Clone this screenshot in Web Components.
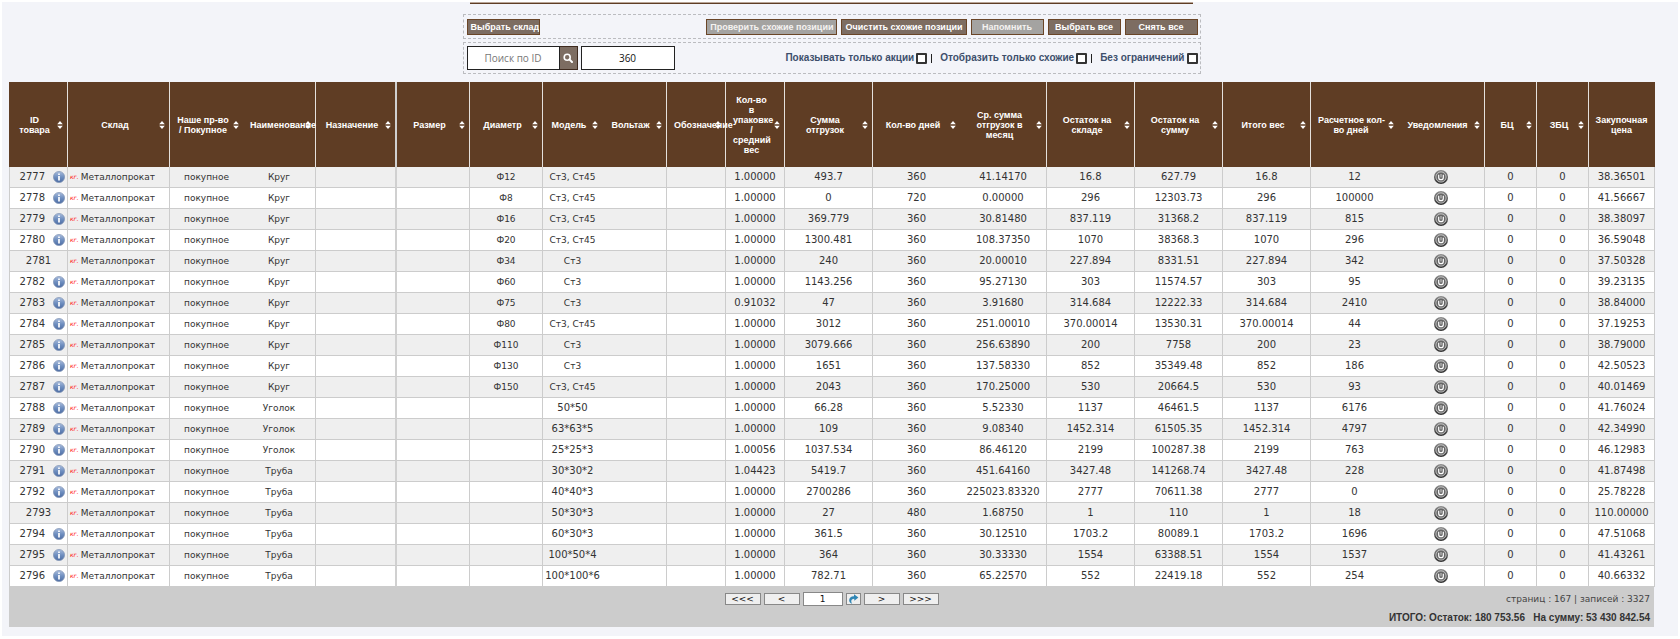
<!DOCTYPE html>
<html lang="ru">
<head>
<meta charset="utf-8">
<title>Складские остатки</title>
<style>
html{background:#fff}
body{margin:2px;background:#f3f4f9;font-family:"DejaVu Sans",Verdana,sans-serif;color:#333}
</style>
</head>
<body>
<stock-page></stock-page>
<script>
const define=(name,html,setup)=>customElements.define(name,class extends HTMLElement{
  constructor(){super();this.attachShadow({mode:'open'}).innerHTML=html;}
  connectedCallback(){if(setup&&!this.ready){this.ready=true;setup(this,this.shadowRoot);}}
});

define('tool-button',`<style>
:host{display:block;width:73px}
:host([wide]){width:auto}
button{box-sizing:border-box;display:block;width:100%;height:16px;padding:0 3px;overflow:hidden;white-space:nowrap;border:1px solid #6a4527;background:#7d6d62;color:#fff;font:bold 9px/14px "Liberation Sans",Arial,sans-serif}
button:disabled{background:#a4a3a1;color:#f4f2f0}
</style><button type="button"><slot></slot></button>`,(h,r)=>{r.querySelector('button').disabled=h.hasAttribute('disabled');});

define('check-option',`<style>
:host{display:block}
label{display:flex;align-items:center;gap:2px;font:bold 10px/12px "Liberation Sans",Arial,sans-serif;color:#3d4f6c}
input{appearance:none;box-sizing:border-box;width:11px;height:11px;margin:0;border:2px solid #333;border-radius:1px;background:#fff}
</style><label><slot></slot><input type="checkbox"></label>`);

define('search-box',`<style>
:host{display:flex;gap:3px;height:24px}
form{display:flex}
input{box-sizing:border-box;width:93px;height:24px;margin:0;padding:0;border:1px solid #222;background:#fff;text-align:center;font:10px/22px "Open Sans","Noto Sans",sans-serif;color:#111}
input::placeholder{color:#777;opacity:1}
.num{width:94px}
button{box-sizing:border-box;display:flex;align-items:center;justify-content:center;width:18px;height:24px;padding:0;border:1px solid #3e2a1e;border-left:0;background:#7d6d62}
svg{width:10px;height:10px}
</style><form><input type="text" placeholder="Поиск по ID" aria-label="Поиск по ID"><button type="button" aria-label="Найти"><svg viewBox="0 0 10 10" fill="none" stroke="#fff"><circle cx="4.2" cy="4.2" r="3" stroke-width="1.6"/><path d="M6.4 6.4 9 9" stroke-width="2" stroke-linecap="round"/></svg></button></form><input class="num" type="text" value="360" aria-label="Количество дней">`);

define('filter-panel',`<style>
:host{display:block;box-sizing:border-box;width:738px;max-width:100%;margin:0 auto}
.row{box-sizing:border-box;display:flex;align-items:center;justify-content:space-between;padding:0 2px 0 3px;border:1px dashed #bbbcc0}
.a{height:25px}
.b{height:32px;margin-top:3px}
.g{display:flex;align-items:center;gap:4px}
.c{display:flex;align-items:center}
i{width:1px;height:9px;background:#222;margin:0 8px 0 4px}
</style>
<div class="row a"><tool-button>Выбрать склад</tool-button><div class="g"><tool-button wide disabled>Проверить схожие позиции</tool-button><tool-button wide>Очистить схожие позиции</tool-button><tool-button disabled>Напомнить</tool-button><tool-button>Выбрать все</tool-button><tool-button>Снять все</tool-button></div></div>
<div class="row b"><search-box></search-box><div class="c"><check-option>Показывать только акции</check-option><i></i><check-option>Отобразить только схожие</check-option><i></i><check-option>Без ограничений</check-option></div></div>`);

define('info-icon',`<style>:host{display:block;width:12px;height:12px}svg{display:block}</style>
<svg width="12" height="12" viewBox="0 0 12 12"><defs><linearGradient id="g" x2="0" y2="1"><stop stop-color="#a9bcdc"/><stop offset=".5" stop-color="#6f8fc0"/><stop offset="1" stop-color="#4c6ca3"/></linearGradient></defs><circle cx="6" cy="6" r="5.6" fill="url(#g)" stroke="#8395b5" stroke-width=".7"/><path d="M6 2.4v1.5M6 5v4.4" stroke="#fff" stroke-width="1.7"/></svg>`);

define('power-icon',`<style>:host{display:block;width:14px;height:14px}svg{display:block}</style>
<svg width="14" height="14" viewBox="0 0 14 14" fill="none"><defs><linearGradient id="g" x2="0" y2="1"><stop stop-color="#8e8e8e"/><stop offset="1" stop-color="#2e2e2e"/></linearGradient></defs><circle cx="7" cy="7" r="7" fill="url(#g)"/><circle cx="7" cy="7" r="5.100" fill="#666" stroke="#d8d8d8" stroke-width=".8"/><path d="M4.700 4.800v2.600a2.300 2.300 0 0 0 4.600 0V4.800" stroke="#fff" stroke-width="1.200"/><path d="M7 4v3.400" stroke="#ddd" stroke-width=".9"/></svg>`);

const COLS=[['ID<br>товара',59],['Склад',102],['Наше пр-во<br>/ Покупное',73,'n'],['Наименование',73],['Назначение',81,'d'],['Размер',73],['Диаметр',73],['Модель',59,'n'],['Вольтаж',65],['Обозначение',59],['Кол-во<br>в<br>упаковке<br>/<br>средний<br>вес',59],['Сумма<br>отгрузок',88],['Кол-во дней',87,'n'],['Ср. сумма<br>отгрузок в<br>месяц',87],['Остаток на<br>складе',88],['Остаток на<br>сумму',88],['Итого вес',88],['Расчетное кол-<br>во дней',87,'n'],['Уведомления',87],['БЦ',52],['ЗБЦ',52],['Закупочная<br>цена',66,'last']];
const ROWS=`2777|Круг|Ф12|Ст3, Ст45|1.00000|493.7|360|41.14170|16.8|627.79|12|38.36501
2778|Круг|Ф8|Ст3, Ст45|1.00000|0|720|0.00000|296|12303.73|100000|41.56667
2779|Круг|Ф16|Ст3, Ст45|1.00000|369.779|360|30.81480|837.119|31368.2|815|38.38097
2780|Круг|Ф20|Ст3, Ст45|1.00000|1300.481|360|108.37350|1070|38368.3|296|36.59048
2781|Круг|Ф34|Ст3|1.00000|240|360|20.00010|227.894|8331.51|342|37.50328
2782|Круг|Ф60|Ст3|1.00000|1143.256|360|95.27130|303|11574.57|95|39.23135
2783|Круг|Ф75|Ст3|0.91032|47|360|3.91680|314.684|12222.33|2410|38.84000
2784|Круг|Ф80|Ст3, Ст45|1.00000|3012|360|251.00010|370.00014|13530.31|44|37.19253
2785|Круг|Ф110|Ст3|1.00000|3079.666|360|256.63890|200|7758|23|38.79000
2786|Круг|Ф130|Ст3|1.00000|1651|360|137.58330|852|35349.48|186|42.50523
2787|Круг|Ф150|Ст3, Ст45|1.00000|2043|360|170.25000|530|20664.5|93|40.01469
2788|Уголок||50*50|1.00000|66.28|360|5.52330|1137|46461.5|6176|41.76024
2789|Уголок||63*63*5|1.00000|109|360|9.08340|1452.314|61505.35|4797|42.34990
2790|Уголок||25*25*3|1.00056|1037.534|360|86.46120|2199|100287.38|763|46.12983
2791|Труба||30*30*2|1.04423|5419.7|360|451.64160|3427.48|141268.74|228|41.87498
2792|Труба||40*40*3|1.00000|2700286|360|225023.83320|2777|70611.38|0|25.78228
2793|Труба||50*30*3|1.00000|27|480|1.68750|1|110|18|110.00000
2794|Труба||60*30*3|1.00000|361.5|360|30.12510|1703.2|80089.1|1696|47.51068
2795|Труба||100*50*4|1.00000|364|360|30.33330|1554|63388.51|1537|41.43261
2796|Труба||100*100*6|1.00000|782.71|360|65.22570|552|22419.18|254|40.66332`.split('\n').map(l=>l.split('|'));

define('stock-table',`<style>
:host{display:block}
table{width:100%;table-layout:fixed;border-collapse:separate;border-spacing:0;color:#333}
th,td{box-sizing:border-box;padding:0;border-right:1px solid #ccc;text-align:center;white-space:nowrap}
th{height:85px;background:#5f3d24;border-right-color:#e4e0dc;font:bold 9px/10px "Liberation Sans",Arial,sans-serif;color:#fff}
th button{display:flex;align-items:center;gap:4px;width:100%;padding:0 4px 0 7px;border:0;background:none;font:inherit;color:inherit}
th span{flex:1;min-width:0}
th svg{flex:none;width:6px;height:8px}
th.last{border-right-color:#5f3d24}
th.last button{padding:0 2px}
.n{border-right:0}
.d{border-right:2px solid #d0d0d0}
td{height:21px;border-bottom:1px solid #ccc;font-size:10px;line-height:12px}
td:first-child{border-left:1px solid #ccc}
tr:nth-child(odd) td{background:#efefef}
tr:nth-child(even) td{background:#fff}
.t{font-size:9px}
.id{display:flex;align-items:center;justify-content:center}
.id.i{justify-content:flex-end;gap:8px;padding-right:2px}
.wh{display:flex;align-items:center;gap:2px;padding-left:2px}
.wh em{font-size:6px;line-height:8px;color:#f00}
.clip{display:block;margin:0 2px;overflow:hidden}
power-icon{margin:0 auto}
</style><table><colgroup></colgroup><thead><tr></tr></thead><tbody></tbody></table>`,(h,r)=>{
  const arrows='<svg viewBox="0 0 6 8" fill="#fff"><path d="M3 0 5.8 3.3H.2zM3 8 .2 4.7h5.6z"/></svg>';
  r.querySelector('colgroup').innerHTML=COLS.map(c=>`<col style="width:${c[1]}px">`).join('');
  r.querySelector('thead tr').innerHTML=COLS.map(c=>`<th scope="col" class="${c[2]||''}"><button type="button"><span>${c[0]}</span>${c[2]==='last'?'':arrows}</button></th>`).join('');
  r.querySelector('tbody').innerHTML=ROWS.map(([id,name,dia,model,pack,sum,days,avg,left,cost,calc,price])=>{
    const info=id!=='2781'&&id!=='2793';
    const cells=[
      `<div class="id${info?' i':''}">${id}${info?'<info-icon></info-icon>':''}</div>`,
      '<div class="wh t"><em>кг.</em>Металлопрокат</div>',
      '<span class="t">покупное</span>',`<span class="t">${name}</span>`,'','',
      `<span class="t">${dia}</span>`,
      `<span class="clip${model[0]==='С'?' t':''}">${model}</span>`,'','',
      pack,sum,days,avg,left,cost,left,calc,'<power-icon></power-icon>','0','0',price];
    return '<tr>'+cells.map((c,i)=>`<td class="${COLS[i][2]||''}">${c}</td>`).join('')+'</tr>';
  }).join('');
});

define('page-nav',`<style>
:host{display:grid;grid-template-columns:1fr auto 1fr;grid-template-rows:24px 16px;padding:0 4px;background:#ccc;font-size:9px;line-height:24px;color:#444}
nav{grid-column:2;display:flex;align-items:center;gap:3px}
button,input{box-sizing:border-box;width:36px;height:12px;margin:0;padding:0;border:1px solid #888;background:#efefef;text-align:center;font:9px/10px "DejaVu Sans",Verdana,sans-serif;color:#111}
input{width:40px;height:14px;background:#fff}
.go{width:15px;display:flex;align-items:center;justify-content:center}
.info{text-align:right}
.tot{grid-column:1/-1;text-align:right;font:bold 10px/14px "Liberation Sans",Arial,sans-serif;color:#333;white-space:pre}
</style><nav><button type="button">&lt;&lt;&lt;</button><button type="button">&lt;</button><input type="text" value="1" aria-label="Страница"><button type="button" class="go" aria-label="Перейти"><svg width="11" height="10" viewBox="0 0 11 10"><path d="M4.200 9.700C.2 9.200-.4 2.400 6 2.300V.3L10.400 3.400 6.300 6.700V4.700C3.200 4.700 2.400 7.600 4.200 9.700z" fill="#2f86b5"/></svg></button><button type="button">&gt;</button><button type="button">&gt;&gt;&gt;</button></nav>
<div class="info">страниц : 167 | записей : 3327</div>
<div class="tot">ИТОГО: Остаток: 180 753.56   На сумму: 53 430 842.54</div>`);

define('stock-page',`<style>
:host{display:block;padding:0 24px 9px 7px}
.top{box-sizing:border-box;width:723px;max-width:100%;height:2px;margin:0 auto;border-bottom:1px solid #5f3d24;background:#b9a698}
filter-panel{margin-top:10px}
stock-table{margin-top:8px}
</style><div class="top"></div><filter-panel></filter-panel><stock-table></stock-table><page-nav></page-nav>`);
</script>
</body>
</html>
